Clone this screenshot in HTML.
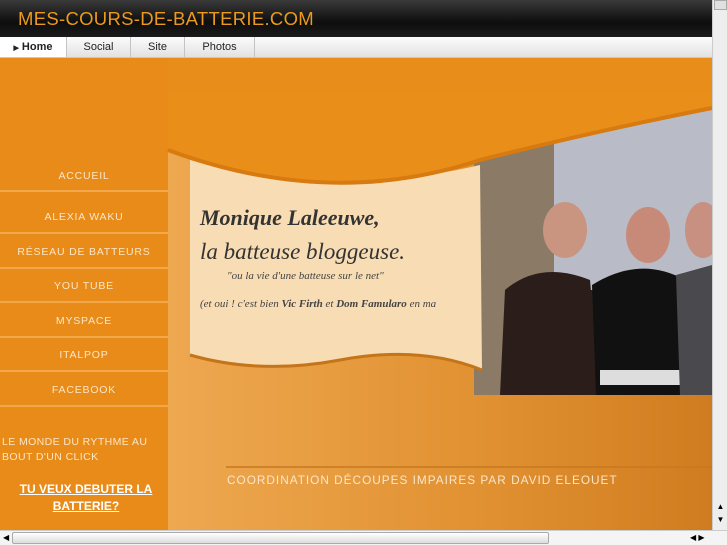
<!DOCTYPE html>
<html><head><meta charset="utf-8"><style>
*{margin:0;padding:0;box-sizing:border-box}
body{width:727px;height:545px;overflow:hidden;background:#e88c1a;font-family:"Liberation Sans",sans-serif;position:relative}
#top{position:absolute;left:0;top:0;width:712px;height:37px;background:linear-gradient(#3a3a3a,#0e0e0e 60%,#1a1a1a)}
#top span{position:absolute;left:18px;top:8px;color:#eb9a1e;font-size:18.5px;letter-spacing:0.3px}
#nav{position:absolute;left:0;top:37px;width:712px;height:21px;background:linear-gradient(#fbfbfb,#e2e2e2);border-bottom:1px solid #c8c8c8}
#nav div{position:absolute;top:0;height:20px;font-size:11px;line-height:20px;text-align:center;border-right:1px solid #c4c4c4;color:#222}
#side{position:absolute;left:0;top:58px;width:168px;height:472px;background:#e88b18}
.m{position:absolute;left:0;width:168px;text-align:center;color:#fbe6c8;font-size:10.5px;letter-spacing:0.8px}
.sep{position:absolute;left:0;width:168px;height:2px;background:#f2a84a}
#main{position:absolute;left:168px;top:90px;width:544px;height:440px;background:linear-gradient(90deg,#eea850,#e09030 60%,#cf7c20)}
#vs{position:absolute;left:712px;top:0;width:15px;height:530px;background:#eee;border-left:1px solid #ccc}
#hs{position:absolute;left:0;top:530px;width:727px;height:15px;background:#f4f4f4;border-top:1px solid #ccc}
</style></head><body>
<div id="top"><span>MES-COURS-DE-BATTERIE.COM</span></div>
<div id="nav">
<div style="left:0;width:67px;background:#fff;font-weight:bold"><span style="font-size:7px">▶</span> Home</div>
<div style="left:67px;width:64px">Social</div>
<div style="left:131px;width:54px">Site</div>
<div style="left:185px;width:70px">Photos</div>
</div>
<div id="side">
<div class="m" style="top:112px">ACCUEIL</div><div class="sep" style="top:132px"></div>
<div class="m" style="top:153px">ALEXIA WAKU</div><div class="sep" style="top:174px"></div>
<div class="m" style="top:188px">RÉSEAU DE BATTEURS</div><div class="sep" style="top:209px"></div>
<div class="m" style="top:222px">YOU TUBE</div><div class="sep" style="top:243px"></div>
<div class="m" style="top:257px">MYSPACE</div><div class="sep" style="top:278px"></div>
<div class="m" style="top:291px">ITALPOP</div><div class="sep" style="top:312px"></div>
<div class="m" style="top:326px">FACEBOOK</div><div class="sep" style="top:347px"></div>
<div style="position:absolute;left:2px;top:377px;color:#fbe6c8;font-size:10.5px;line-height:15px;letter-spacing:.4px">LE MONDE DU RYTHME AU<br>BOUT D'UN CLICK</div>
<div style="position:absolute;left:0;width:172px;top:423px;text-align:center;color:#fff;font-size:12px;font-weight:bold;text-decoration:underline;line-height:17px">TU VEUX DEBUTER LA<br>BATTERIE?</div>
</div>
<div id="main"></div>
<svg style="position:absolute;left:0;top:0" width="727" height="545">
<rect x="474" y="143" width="238" height="252" fill="#2a2220"/>
<rect x="474" y="143" width="80" height="252" fill="#8a7a66"/>
<rect x="554" y="110" width="158" height="180" fill="#b9bcc6"/>
<ellipse cx="565" cy="230" rx="22" ry="28" fill="#c99480"/>
<path d="M500 395 L505 290 Q540 260 590 280 L600 395Z" fill="#2b1e1a"/>
<ellipse cx="648" cy="235" rx="22" ry="28" fill="#c88a78"/>
<path d="M596 395 L592 285 Q640 255 685 280 L684 395Z" fill="#111"/>
<rect x="600" y="370" width="82" height="15" fill="#ddd"/>
<ellipse cx="703" cy="230" rx="18" ry="28" fill="#c89080"/>
<path d="M680 395 L676 275 L712 265 L712 395Z" fill="#4a4a4e"/>
<path d="M190 160 Q330 200 480 165 L482 370 Q420 345 340 360 Q260 375 190 355Z" fill="#f8dcb4"/>
<path d="M168 150 Q330 210 480 160 Q600 130 712 108 L712 90 L168 90Z" fill="#ea8e1a"/>
<path d="M168 150 Q330 210 480 160 Q600 130 712 108" fill="none" stroke="#d77a10" stroke-width="4"/>
<path d="M190 355 Q260 375 340 360 Q420 345 482 370" fill="none" stroke="#c4751a" stroke-width="3"/>
<rect x="168" y="58" width="544" height="32" fill="#e88c1a"/>
<line x1="226" y1="467" x2="712" y2="467" stroke="#c8781e" stroke-width="1.5"/>
<text x="200" y="225" font-family="Liberation Serif" font-style="italic" font-weight="bold" font-size="22" fill="#333">Monique Laleeuwe,</text>
<text x="200" y="259" font-family="Liberation Serif" font-style="italic" font-size="23" fill="#333">la batteuse bloggeuse.</text>
<text x="227" y="279" font-family="Liberation Serif" font-style="italic" font-size="11" fill="#444">"ou la vie d'une batteuse sur le net"</text>
<text x="200" y="307" font-family="Liberation Serif" font-style="italic" font-size="11" fill="#444">(et oui ! c'est bien <tspan font-weight="bold">Vic Firth</tspan> et <tspan font-weight="bold">Dom Famularo</tspan> en ma</text>
<text x="227" y="484" font-family="Liberation Sans" font-size="11.8" fill="#fbe6c8" letter-spacing="1">COORDINATION DÉCOUPES IMPAIRES PAR DAVID ELEOUET</text>
</svg>
<div id="vs"><div style="position:absolute;left:1px;top:0;width:13px;height:10px;background:#e0e0e0;border:1px solid #aaa"></div><div style="position:absolute;left:1px;top:500px;width:13px;height:28px;font-size:8px;text-align:center;line-height:13px">▲<br>▼</div></div>
<div id="hs"><div style="position:absolute;left:12px;top:1px;width:537px;height:12px;background:linear-gradient(#fff,#ddd);border:1px solid #aaa;border-radius:2px"></div><div style="position:absolute;left:0;top:0;font-size:8px;line-height:14px;padding-left:3px">◀</div><div style="position:absolute;left:690px;top:0;font-size:8px;line-height:14px">◀ ▶</div></div>
</body></html>
